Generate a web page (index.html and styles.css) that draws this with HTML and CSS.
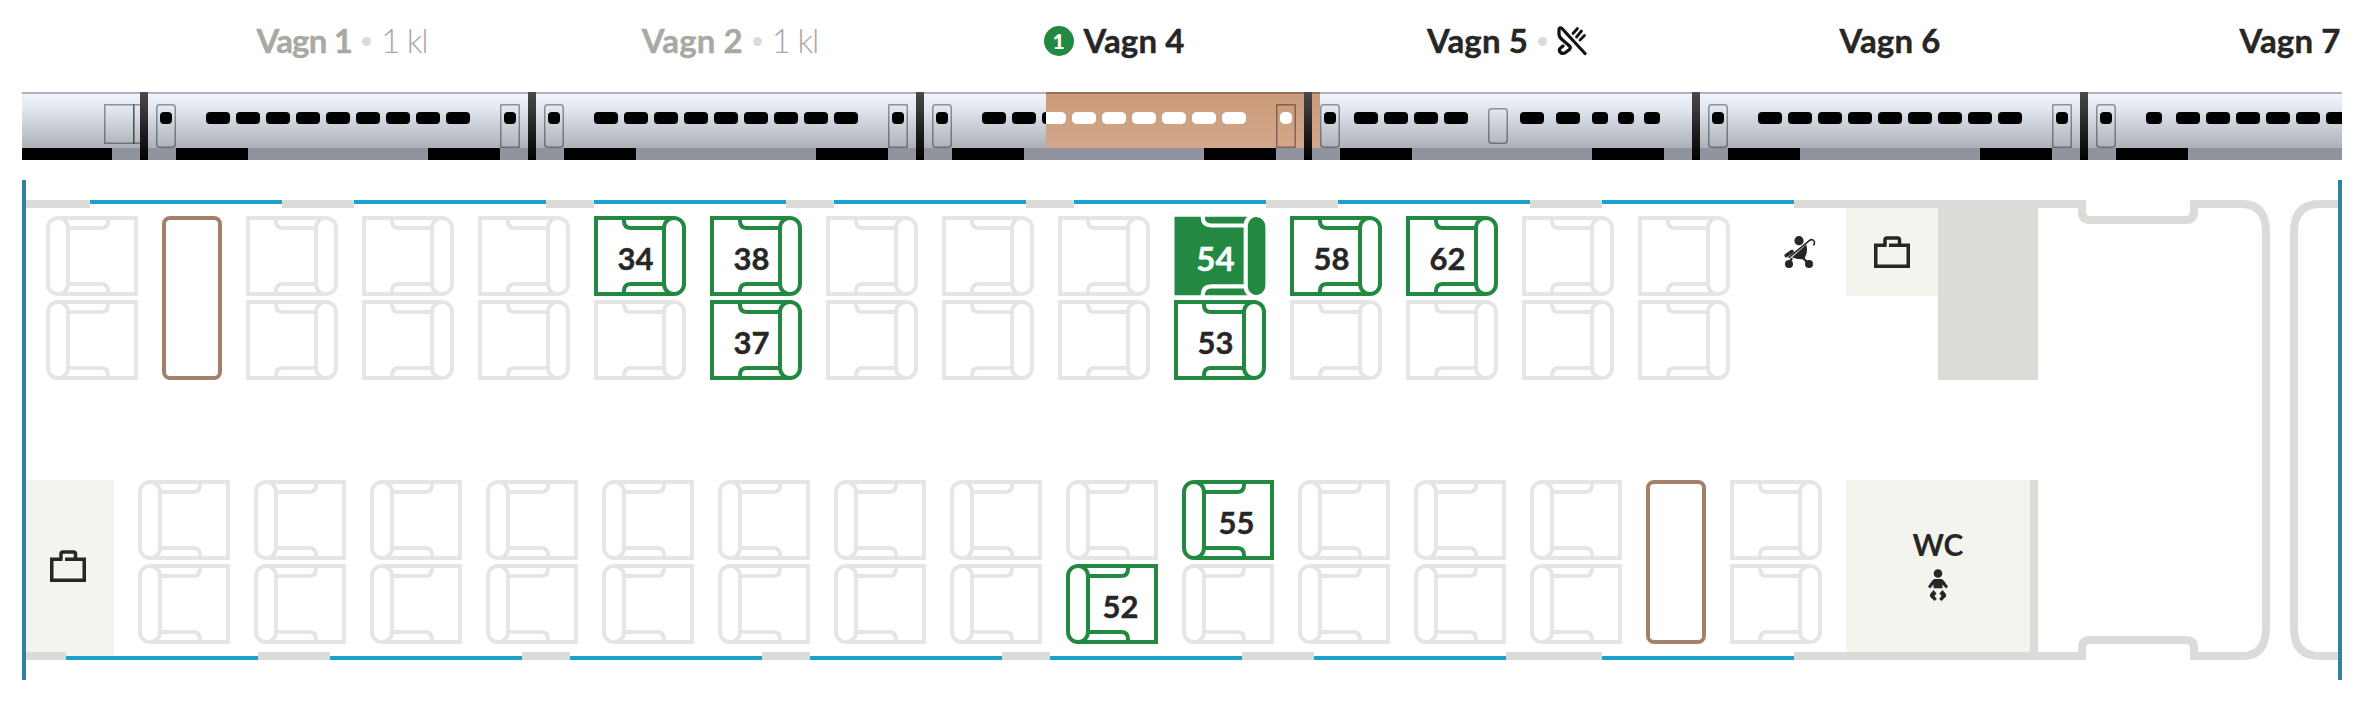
FILE: index.html
```
<!DOCTYPE html>
<html lang="sv">
<head>
<meta charset="utf-8">
<title>Välj plats</title>
<link rel="stylesheet" href="styles.css">
</head>
<body>
<svg class="defs" aria-hidden="true">
  <defs>
    <symbol id="seat" viewBox="0 0 92 80">
      <path d="M80 2H2V78H80"/>
      <path d="M30 2V5Q30 12 37 12H70M30 78V75Q30 68 37 68H70"/>
      <rect x="70" y="2" width="20" height="76" rx="10"/>
    </symbol>
    <symbol id="seat-selected" viewBox="0 0 92 80">
      <path class="solid" d="M0.5 .7H80Q91.700 1 91.700 13V67Q91.700 79 80 79.300H0.500Z"/>
      <path class="cut" d="M28.700 0V1Q29 9.500 37 9.500H71M28.700 80V79Q29 70.300 37 70.300H71"/>
      <rect class="pill" x="71.700" y="-1.300" width="22" height="82.600" rx="11"/>
    </symbol>
    <symbol id="suitcase" viewBox="0 0 36 32">
      <path d="M15 9.250H34.250V30.250H1.750V9.250H12.500M11 9.250V4Q11 2 13 2H23.500Q25.500 2 25.500 4V9.250" fill="none" stroke="#262626" stroke-width="3.500"/>
    </symbol>
  </defs>
</svg>

<main class="page">
  <nav class="labels">
    <div class="label muted narrow"><b>Vagn 1</b><i></i><span>1 kl</span></div>
    <div class="label muted"><b>Vagn 2</b><i></i><span>1 kl</span></div>
    <div class="label"><em>1</em><b>Vagn 4</b></div>
    <div class="label dining"><b>Vagn 5</b><i></i>
      <svg width="30" height="30" viewBox="0 0 30 30" fill="none" stroke="#111" stroke-width="3.200" stroke-linecap="round" stroke-linejoin="round"><path d="M28 27.500L5 2.500Q2 0.500 2 4V8Q2 11 5 13.500L12.500 20Q14 21.500 12.500 23.500L8.500 26.500Q5.500 28.500 3 26Q1.500 23.500 3.500 22L6 20"/><path d="M20.500 2.500L16 7.500M24.500 5L19.500 11M27.500 9.500L23 14" stroke-width="2.800"/></svg>
    </div>
    <div class="label"><b>Vagn 6</b></div>
    <div class="label last"><b>Vagn 7</b></div>
  </nav>

  <svg class="train" width="2320" height="68" viewBox="22 92 2320 68">
    <defs>
      <linearGradient id="body" x1="0" y1="0" x2="0" y2="1"><stop offset="0" stop-color="#eff4fe"/><stop offset=".25" stop-color="#e4e8f1"/><stop offset="1" stop-color="#acb0b7"/></linearGradient>
      <linearGradient id="copper" x1="0" y1="0" x2="0" y2="1"><stop offset="0" stop-color="#ca9b78"/><stop offset="1" stop-color="#d3a78d"/></linearGradient>
      <linearGradient id="joint" x1="0" y1="0" x2="0" y2="1"><stop offset="0" stop-color="#4a4a4a"/><stop offset="1" stop-color="#000"/></linearGradient>
      <clipPath id="view"><rect x="1046" y="92" width="266" height="56"/></clipPath>
    </defs>
    <rect x="22" y="92" width="2320" height="2" fill="#b0b4ba"/>
    <rect x="22" y="94" width="2320" height="54" fill="url(#body)"/>
    <rect x="22" y="148" width="2320" height="12" fill="#91949e"/>
    <rect x="1046" y="92" width="274" height="2" fill="#95705a"/>
    <rect x="1046" y="94" width="274" height="54" fill="url(#copper)"/>
    <g id="doors" fill="none" stroke="#000" stroke-opacity=".38" stroke-width="1.500"></g>
    <g id="windows"></g>
    <use href="#windows" clip-path="url(#view)" fill="#fff"/>
    <g id="bogies"></g>
    <g id="joints" fill="url(#joint)"></g>
  </svg>

  <section class="map">
    <div class="cabin">
      <div class="wall top" data-wall="g64 b192 g72 b192 g48 b192 g48 b192 g48 b192 g72 b192 g72 b192 g244"></div>
      <div class="row upper">
        <div class="seats" id="upper"></div>
        <div class="stroller">
          <svg width="32" height="32" viewBox="0 0 32 32" fill="#262626"><circle cx="15" cy="4.700" r="4.600"/><path d="M22.300 8.500L8 21.300Q13 23.800 20 23.200Q24.500 16 22.300 8.500Z"/><path d="M4.500 21.800L25 4.800Q29 2 30.500 6Q30.500 8 29.500 9.500" fill="none" stroke="#262626" stroke-width="1.600"/><path d="M2.200 19.500L8 15.600" stroke="#262626" stroke-width="3.600" stroke-linecap="round"/><path d="M8 22L5 27M18 21L25 28" stroke="#262626" stroke-width="2.200"/><circle cx="5" cy="28" r="4"/><circle cx="25" cy="28" r="4"/></svg>
        </div>
        <div class="luggage small"><svg width="36" height="32"><use href="#suitcase" width="36" height="32"/></svg></div>
        <div class="cabinet"></div>
      </div>
      <div class="row lower">
        <div class="luggage tall"><svg width="36" height="32"><use href="#suitcase" width="36" height="32"/></svg></div>
        <div class="seats" id="lower"></div>
        <div class="wc">
          <b>WC</b>
          <svg width="20" height="32" viewBox="0 0 20 32" fill="#262626"><circle cx="10" cy="4.500" r="4.300"/><path d="M6.500 10H13.500Q15 10.500 16 12L20 17.500L18 19.500L14.500 15.500V19.300H5.500V15.500L2 19.500L0 17.500L4 12Q5 10.500 6.500 10Z"/><path d="M5.500 21L8.500 24.500L6.500 27L8.800 30L6.500 32L2 27.500Q1.500 26 2.500 24.500ZM14.500 21L11.500 24.500L13.500 27L11.200 30L13.500 32L18 27.500Q18.500 26 17.500 24.500Z"/></svg>
        </div>
      </div>
      <div class="wall bottom" data-wall="g40 b192 g72 b192 g48 b192 g48 b192 g48 b192 g72 b192 g96 b192 g244"></div>
    </div>
    <svg class="vestibule" width="300" height="460" viewBox="0 0 300 460" fill="none" stroke="#dbdcd8" stroke-width="8">
      <path d="M0 4H44V12Q44 20 52 20H148Q156 20 156 12V4H204Q228 4 228 32V428Q228 456 204 456H156V448Q156 440 148 440H52Q44 440 44 448V456H0"/>
      <path d="M300 4H282Q256 4 256 32V428Q256 456 282 456H300"/>
      <path d="M48 0H152V12H48ZM48 448H152V460H48Z" fill="#fff" stroke="none"/>
    </svg>
  </section>
</main>
<script src="script.js"></script>
</body>
</html>
```

FILE: styles.css
```
body {
  margin: 0;
  background: #fff;
  color: #262626;
  font-family: Lato, "Open Sans", sans-serif;
}

.defs { display: block; width: 0; height: 0; }

.page {
  box-sizing: border-box;
  width: 2366px;
  height: 708px;
  padding: 0 24px 0 22px;
  overflow: hidden;
}

.labels {
  display: flex;
  gap: 8px;
  height: 92px;
  padding-left: 126px;
  overflow: hidden;
}

.label {
  display: flex;
  flex: 0 0 380px;
  align-items: center;
  justify-content: center;
  gap: 10px;
  box-sizing: border-box;
  height: 82px;
  font-size: 33px;
  line-height: 40px;
  white-space: nowrap;
}

.label b {
  margin-top: -3px;
  font-weight: 700;
  letter-spacing: 0.1px;
  -webkit-text-stroke: 0.4px currentColor;
}
.label span {
  margin-top: -3px;
  font-weight: 300;
  letter-spacing: -1.2px;
}
.label i { width: 9px; height: 9px; border-radius: 50%; background: #dbdcd8; }
.label em {
  width: 30px;
  height: 30px;
  border-radius: 50%;
  background: #238942;
  color: #fff;
  font-size: 21px;
  font-style: normal;
  font-weight: 900;
  line-height: 30px;
  text-align: center;
}
.muted { padding-left: 8px; color: #a8a9a4; }
.narrow b { letter-spacing: -0.8px; }
.dining { padding-left: 10px; }
.last { flex-basis: 404px; }

.train { display: block; }

.map {
  display: flex;
  box-sizing: border-box;
  width: 2320px;
  height: 500px;
  margin-top: 20px;
  padding: 20px 0;
  border-right: 4px solid #307fa8;
  border-left: 4px solid #307fa8;
}

.cabin {
  display: flex;
  flex: 0 0 2012px;
  flex-direction: column;
}
.vestibule { display: block; }

.wall { display: flex; flex: 0 0 8px; }
.wall.bottom { position: relative; align-items: flex-end; }
.window { height: 4px; background: #1aa2c8; }
.panel { height: 8px; background: #dbdcd8; }

.row { display: flex; height: 172px; }
.upper { margin-bottom: 100px; }

.seats { display: flex; gap: 24px; }
.upper .seats { padding: 8px 24px 0 20px; }
.lower .seats { padding: 0 24px; }

.pair { display: flex; flex-direction: column; gap: 4px; }
.seat { display: block; fill: none; stroke: #e5e5e5; stroke-width: 4; }
.seat text {
  fill: #262626;
  stroke: #262626;
  stroke-width: 0.4;
  font-size: 31px;
  font-weight: 700;
  text-anchor: middle;
}
.free { stroke: #238942; }
.chosen { stroke: none; }
.chosen text { fill: #fff; stroke: #fff; font-size: 33px; }
.solid { fill: #238942; }
.cut, .pill { fill: none; stroke: #fff; stroke-width: 4.200; }

.table {
  box-sizing: border-box;
  width: 60px;
  height: 164px;
  border: 4px solid #a4806a;
  border-radius: 8px;
}

.stroller, .luggage, .wc {
  display: flex;
  align-items: center;
  justify-content: center;
}
.stroller { width: 92px; height: 88px; }
.luggage { background: #f3f4ee; }
.luggage.small { width: 92px; height: 88px; }
.luggage.tall {
  box-sizing: border-box;
  width: 88px;
  height: 176px;
  padding: 0 4px 4px 0;
}
.cabinet { width: 100px; background: #dbdcd8; }

.wc {
  flex-direction: column;
  gap: 10px;
  box-sizing: border-box;
  width: 192px;
  padding-bottom: 2px;
  border-right: 8px solid #dbdcd8;
  background: #f3f4ee;
  font-size: 30px;
  line-height: 30px;
}
```

FILE: script.js
```
const NS = 'http://www.w3.org/2000/svg';

function rect(group, x, y, width, height, rx) {
  const el = document.createElementNS(NS, 'rect');
  Object.entries({ x, y, width, height, rx: rx || 0 }).forEach(([k, v]) => el.setAttribute(k, v));
  document.getElementById(group).append(el);
}

// Train overview: regular coaches share one window layout, 5 and 7 differ.
const regular = Array.from({ length: 9 }, (_, i) => [58 + 30 * i, 24]);
const bistro = [[42, 24], [72, 24], [102, 24], [132, 24], [208, 24], [244, 24], [280, 16], [306, 16], [332, 16]];
const seventh = [[58, 16]].concat(Array.from({ length: 6 }, (_, i) => [88 + 30 * i, 24]));
const coaches = [regular, regular, regular, bistro, regular, seventh];

rect('doors', 104.75, 104.75, 29, 38.5);
rect('doors', 133.75, 104.75, 12, 38.5);
rect('bogies', 22, 148, 90, 12);

coaches.forEach((windows, n) => {
  const x = 148 + 388 * n;
  rect('joints', x - 8, 92, 8, 68);
  rect('doors', x + 8.75, 104.75, 18.5, 42.5, 3);
  rect('windows', x + 12, 112, 12, 12, 4);
  windows.forEach(([offset, width]) => rect('windows', x + offset, 112, width, 12, 4));
  if (windows === bistro) {
    rect('doors', x + 176.75, 108.75, 18.5, 34.5, 3);
  } else {
    rect('doors', x + 352.75, 104.75, 18.5, 42.5, 0.5);
    rect('windows', x + 356, 112, 12, 12, 4);
  }
  rect('bogies', x + 28, 148, 72, 12);
  rect('bogies', x + 280, 148, 72, 12);
});

// Coach walls: g = solid panel, b = window, followed by the length.
document.querySelectorAll('.wall').forEach((wall) => {
  wall.dataset.wall.split(' ').forEach((part) => {
    const el = document.createElement('div');
    el.className = part[0] === 'b' ? 'window' : 'panel';
    el.style.width = part.slice(1) + 'px';
    wall.append(el);
  });
});

function seat(number, facing, state) {
  const flip = facing === 'left' ? ' transform="translate(92 0) scale(-1 1)"' : '';
  const symbol = state === 'chosen' ? 'seat-selected' : 'seat';
  const label = number ? `<text x="${facing === 'left' ? 54.5 : 41.5}" y="${state === 'chosen' ? 54.5 : 54}">${number}</text>` : '';
  return `<svg class="seat ${state}" width="92" height="80"><g${flip}><use href="#${symbol}" width="92" height="80"/></g>${label}</svg>`;
}

function pair(facing, numbers) {
  const seats = (numbers || [0, 0]).map((n) => seat(n, facing, n === 54 ? 'chosen' : n ? 'free' : 'taken'));
  return `<div class="pair">${seats.join('')}</div>`;
}

const table = '<div class="table"></div>';
const upperNumbers = { 3: [34, 0], 4: [38, 37], 8: [54, 53], 9: [58, 0], 10: [62, 0] };
const lowerNumbers = { 8: [0, 52], 9: [55, 0] };
const thirteen = Array.from({ length: 13 }, (_, i) => i);

document.getElementById('upper').innerHTML =
  pair('left') + table + thirteen.map((i) => pair('right', upperNumbers[i])).join('');
document.getElementById('lower').innerHTML =
  thirteen.map((i) => pair('left', lowerNumbers[i])).join('') + table + pair('right');
```
